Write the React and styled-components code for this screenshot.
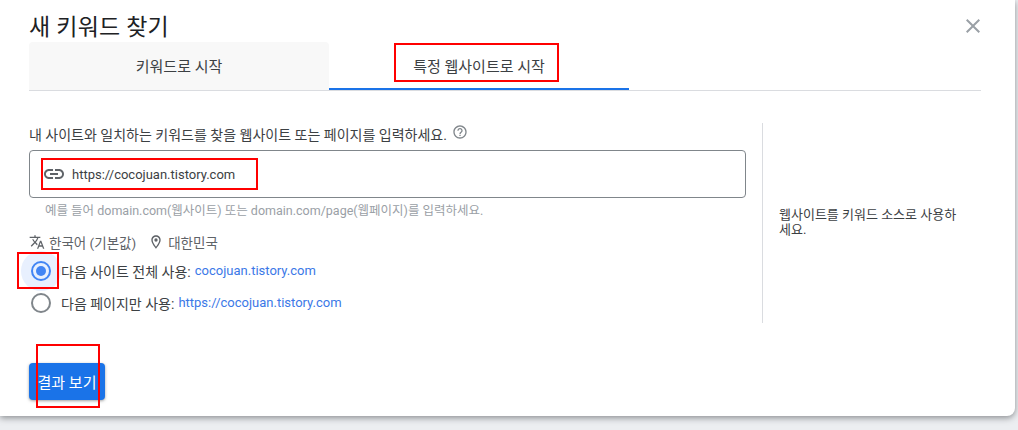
import React from "react";
import styled, { createGlobalStyle } from "styled-components";

const Global = createGlobalStyle`
  html, body { margin: 0; padding: 0; background: #eceef1; }
  body { font-family: Roboto, "Noto Sans CJK KR", sans-serif; width: 1018px; height: 430px; overflow: hidden; position: relative; }
`;
const Page = styled.div`position: relative; width: 1018px; height: 430px; overflow: hidden;`;
const Card = styled.div`
  width: 1015px; height: 416px; box-sizing: border-box; background: #fff;
  border-radius: 0 0 8px 0; box-shadow: 0 2px 6px rgba(60,64,67,.55);
  padding: 0 34px 0 29px; display: flex; flex-direction: column;
`;
const Header = styled.div`height: 42px; display: flex; justify-content: space-between; align-items: center;`;
const Title = styled.h1`margin: 0; font: 400 23px/26px Roboto, "Noto Sans CJK KR", sans-serif; color: #202124; padding-top: 13px; letter-spacing: .2px;`;
const Close = styled.svg`width: 24px; height: 24px; fill: #9aa0a6; margin: 10px -4px 0 0; flex: none;`;
const Tabs = styled.div`display: flex; height: 49px; box-sizing: border-box; border-bottom: 1px solid #dadce0;`;
const Tab = styled.div`
  width: 300px; height: 48px; box-sizing: border-box; display: flex; align-items: center; justify-content: center;
  font-size: 15px; color: #3c4043;
  background: ${p => (p.$active ? "#fff" : "#f8f8f8")};
  border-radius: ${p => (p.$active ? "0" : "4px 4px 0 0")};
  border-bottom: ${p => (p.$active ? "2px solid #1a73e8" : "none")};
  padding-top: ${p => (p.$active ? "1px" : "0")};
  padding-bottom: ${p => (p.$active ? "0" : "1px")};
`;
const Body = styled.div`display: flex; height: 201px; margin-top: 32px;`;
const Main = styled.div`width: 717px; flex: none; padding-top: 1px;`;
const Prompt = styled.div`display: flex; align-items: flex-start; gap: 5px; height: 26px; font-size: 14px; line-height: 22px; color: #3c4043;`;
const Help = styled.svg`width: 16px; height: 16px; fill: #80868b; margin-top: 0; flex: none;`;
const InputBox = styled.div`
  height: 48px; box-sizing: border-box; border: 1px solid #80868b; border-radius: 4px;
  display: flex; align-items: center; gap: 6px; padding: 0 0 0 12px; font-size: 13px; color: #3c4043;
`;
const LinkIcon = styled.svg`width: 24px; height: 24px; fill: #5f6368; flex: none;`;
const Hint = styled.div`font-size: 12.5px; line-height: 16px; color: #9aa0a6; padding: 5px 0 0 16px; height: 16px; white-space: nowrap;`;
const Meta = styled.div`display: flex; align-items: center; height: 20px; margin-top: 13px; font-size: 13.5px; color: #5f6368;`;
const MetaIcon = styled.svg`width: 16px; height: 16px; fill: #5f6368; flex: none; margin-right: 4px;`;
const MetaText = styled.span`margin-right: 12px;`;
const RadioRow = styled.div`display: flex; align-items: center; height: 32px; font-size: 14px; color: #3c4043; padding-bottom: 1px; box-sizing: border-box;`;
const RadioList = styled.div`margin-top: 3px;`;
const RadioSlot = styled.div`width: 32px; flex: none; height: 32px; position: relative; display: flex; align-items: center; justify-content: center;`;
const Ripple = styled.div`position: absolute; left: -8px; top: -4px; width: 40px; height: 40px; border-radius: 50%; background: #e8f0fe;`;
const RadioOuter = styled.div`
  position: relative; width: 20px; height: 20px; box-sizing: border-box; border-radius: 50%;
  border: 2px solid ${p => (p.$on ? "#4285f4" : "#80868b")}; display: flex; align-items: center; justify-content: center;
  margin-left: -8px;
`;
const RadioDot = styled.div`width: 10px; height: 10px; border-radius: 50%; background: #4285f4;`;
const Url = styled.span`color: #3b78e7; margin-left: 4px; font-size: 13px;`;
const Side = styled.div`
  flex: 1; margin-left: 16px; border-left: 1px solid #dadce0; padding: 84px 10px 0 16px;
  font-size: 13px; line-height: 15px; color: #3c4043; box-sizing: border-box; height: 200px;
`;
const SideText = styled.div`width: 184px; word-break: break-all;`;
const Footer = styled.div`margin-top: 39px;`;
const Button = styled.button`
  width: 76px; height: 37px; border: 0; border-radius: 4px; background: #1a73e8; color: #fff;
  font: 400 15px Roboto, "Noto Sans CJK KR", sans-serif; box-shadow: 0 1px 3px rgba(60,64,67,.5); padding: 0;
`;
const Mark = styled.div`
  position: absolute; box-sizing: border-box; border: 2px solid #f00; pointer-events: none;
  left: ${p => p.$x}px; top: ${p => p.$y}px; width: ${p => p.$w}px; height: ${p => p.$h}px;
`;

export default function App() {
  return (
    <Page>
      <Global />
      <Card>
        <Header>
          <Title>새 키워드 찾기</Title>
          <Close viewBox="0 0 24 24"><path d="M19 6.41 17.59 5 12 10.59 6.41 5 5 6.41 10.59 12 5 17.59 6.41 19 12 13.41 17.59 19 19 17.59 13.41 12z" /></Close>
        </Header>
        <Tabs>
          <Tab>키워드로 시작</Tab>
          <Tab $active>특정 웹사이트로 시작</Tab>
        </Tabs>
        <Body>
          <Main>
            <Prompt>
              내 사이트와 일치하는 키워드를 찾을 웹사이트 또는 페이지를 입력하세요.
              <Help viewBox="0 0 24 24"><path d="M11 18h2v-2h-2v2zm1-16C6.48 2 2 6.48 2 12s4.48 10 10 10 10-4.48 10-10S17.52 2 12 2zm0 18c-4.41 0-8-3.59-8-8s3.59-8 8-8 8 3.59 8 8-3.59 8-8 8zm0-14c-2.21 0-4 1.79-4 4h2c0-1.1.9-2 2-2s2 .9 2 2c0 2-3 1.75-3 5h2c0-2.25 3-2.5 3-5 0-2.21-1.79-4-4-4z" /></Help>
            </Prompt>
            <InputBox>
              <LinkIcon viewBox="0 0 24 24"><path d="M3.9 12c0-1.71 1.39-3.1 3.1-3.1h4V7H7c-2.76 0-5 2.24-5 5s2.24 5 5 5h4v-1.9H7c-1.71 0-3.1-1.39-3.1-3.1zM8 13h8v-2H8v2zm9-6h-4v1.9h4c1.71 0 3.1 1.39 3.1 3.1s-1.39 3.1-3.1 3.1h-4V17h4c2.76 0 5-2.24 5-5s-2.24-5-5-5z" /></LinkIcon>
              https://cocojuan.tistory.com
            </InputBox>
            <Hint>예를 들어 domain.com(웹사이트) 또는 domain.com/page(웹페이지)를 입력하세요.</Hint>
            <Meta>
              <MetaIcon viewBox="0 0 24 24"><path d="m12.87 15.07-2.54-2.51.03-.03c1.74-1.94 2.98-4.17 3.71-6.53H17V4h-7V2H8v2H1v1.99h11.17C11.5 7.92 10.44 9.75 9 11.35 8.07 10.32 7.3 9.19 6.69 8h-2c.73 1.63 1.73 3.17 2.98 4.56l-5.09 5.02L4 19l5-5 3.11 3.11.76-2.04zM18.5 10h-2L12 22h2l1.12-3h4.75L21 22h2l-4.5-12zm-2.62 7 1.62-4.33L19.12 17h-3.24z" /></MetaIcon>
              <MetaText>한국어 (기본값)</MetaText>
              <MetaIcon viewBox="0 0 24 24"><path d="M12 2C8.13 2 5 5.13 5 9c0 5.25 7 13 7 13s7-7.75 7-13c0-3.87-3.13-7-7-7zm0 17.1C10 16.5 7 12.2 7 9c0-2.76 2.24-5 5-5s5 2.24 5 5c0 3.2-3 7.5-5 10.1zM12 6.5A2.5 2.5 0 1 0 12 11.5 2.5 2.5 0 0 0 12 6.5z" /></MetaIcon>
              <span>대한민국</span>
            </Meta>
            <RadioList>
              <RadioRow>
                <RadioSlot>
                  <Ripple />
                  <RadioOuter $on><RadioDot /></RadioOuter>
                </RadioSlot>
                다음 사이트 전체 사용: <Url>cocojuan.tistory.com</Url>
              </RadioRow>
              <RadioRow>
                <RadioSlot><RadioOuter /></RadioSlot>
                다음 페이지만 사용: <Url>https://cocojuan.tistory.com</Url>
              </RadioRow>
            </RadioList>
          </Main>
          <Side><SideText>웹사이트를 키워드 소스로 사용하세요.</SideText></Side>
        </Body>
        <Footer><Button>결과 보기</Button></Footer>
      </Card>
      <Mark $x={394} $y={43} $w={165} $h={39} />
      <Mark $x={41} $y={158} $w={217} $h={32} />
      <Mark $x={17} $y={252} $w={42} $h={37} />
      <Mark $x={36} $y={344} $w={64} $h={64} />
    </Page>
  );
}
